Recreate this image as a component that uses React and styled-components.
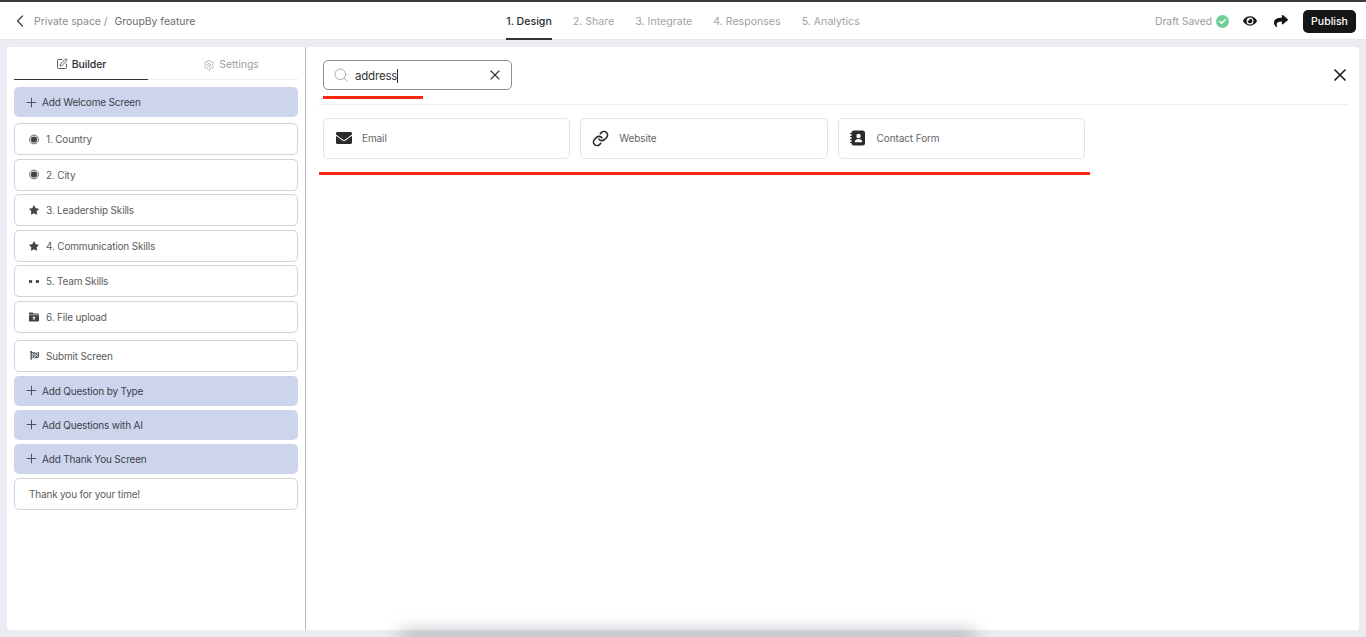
import React from 'react'
import styled, { createGlobalStyle } from 'styled-components'
import { ChevronLeft, Search, X, Plus, SquarePen, Settings, Link } from 'lucide-react'
import { FaStar, FaEnvelope, FaEye, FaShare, FaFlagCheckered, FaCheck } from 'react-icons/fa'

const GlobalStyle = createGlobalStyle`
    html, body {
        margin: 0;
        padding: 0;
        height: 100%;
        overflow: hidden;
        background: #ebecf2;
        font-family: Inter, "Liberation Sans", sans-serif;
    }
    * { box-sizing: border-box; }
`

const Page = styled.div`
    position: relative;
    height: 637px;
    display: flex;
    flex-direction: column;
    overflow: hidden;
`

const Header = styled.header`
    height: 40px;
    flex: none;
    display: grid;
    grid-template-columns: 1fr auto 1fr;
    align-items: stretch;
    background: #fff;
    border-top: 2px solid #3a3b40;
    border-bottom: 1px solid #e6e7ec;
    padding: 0 10px 0 10px;
`

const Crumbs = styled.div`
    display: flex;
    align-items: center;
    padding-top: 1px;
    font-size: 10.4px;
    color: #8a8a8a;
    svg { color: #444; margin-right: 4px; }
`

const CrumbCurrent = styled.span`
    color: #6b6b6b;
    margin-left: 7px;
`

const Steps = styled.nav`
    display: flex;
    gap: 21px;
`

const Step = styled.div`
    display: flex;
    align-items: center;
    padding-top: 2px;
    font-size: 10.6px;
    font-weight: ${p => (p.$active ? 500 : 400)};
    color: ${p => (p.$active ? '#2b2b2b' : '#a3a3a3')};
    border-bottom: 2px solid ${p => (p.$active ? '#333' : 'transparent')};
    margin-bottom: -1px;
`

const Actions = styled.div`
    display: flex;
    align-items: center;
    justify-content: flex-end;
    padding-top: 1px;
`

const DraftText = styled.span`
    font-size: 10.3px;
    color: #9a9a9a;
    margin-right: 4px;
`

const SavedBadge = styled.span`
    width: 13px;
    height: 13px;
    border-radius: 50%;
    background: #6fcf97;
    color: #fff;
    display: flex;
    align-items: center;
    justify-content: center;
    margin-right: 14px;
`

const HeaderIcon = styled.span`
    display: flex;
    color: #151515;
    margin-right: ${p => p.$gap}px;
`

const PublishButton = styled.button`
    height: 23px;
    width: 53px;
    border: none;
    border-radius: 5px;
    background: #161616;
    color: #fff;
    font: 500 10.5px Inter, sans-serif;
    padding: 0;
`

const Panel = styled.div`
    flex: 1;
    display: flex;
    margin: 7px;
    background: #fff;
    border-radius: 3px;
    min-height: 0;
`

const Sidebar = styled.aside`
    width: 299px;
    flex: none;
    border-right: 1px solid #b9b9b9;
    padding: 0 7px;
`

const Tabs = styled.div`
    display: flex;
    height: 33px;
    border-bottom: 1px solid #eeeeee;
    margin-bottom: 7px;
`

const Tab = styled.div`
    width: 134px;
    flex: ${p => (p.$active ? 'none' : 1)};
    display: flex;
    align-items: center;
    justify-content: center;
    gap: 4px;
    padding: 2px 0 0 ${p => (p.$active ? 0 : 16)}px;
    font-size: 10.5px;
    letter-spacing: -0.1px;
    font-weight: ${p => (p.$active ? 500 : 400)};
    color: ${p => (p.$active ? '#2b2b2b' : '#a0a0a0')};
    border-bottom: ${p => (p.$active ? '1px solid #333' : 'none')};
    margin-bottom: -1px;
    svg { color: ${p => (p.$active ? '#333' : '#a0a0a0')}; }
`

const AddRow = styled.div`
    height: 30px;
    margin-top: ${p => p.$top ?? 4}px;
    display: flex;
    align-items: center;
    gap: 3px;
    padding-left: 10px;
    background: #cdd5ec;
    border-radius: 5px;
    font-size: 10px;
    letter-spacing: -0.18px;
    color: #3c3f4a;
`

const ItemRow = styled.div`
    height: 32px;
    margin-top: ${p => p.$top ?? 3.5}px;
    display: flex;
    align-items: center;
    gap: 7px;
    padding-left: 14px;
    background: #fff;
    border: 1px solid #d4d4d6;
    border-radius: 5px;
    font-size: 10px;
    letter-spacing: -0.18px;
    color: #5c5c5c;
`

const ItemIcon = styled.span`
    width: 10px;
    display: flex;
    justify-content: center;
    color: #444;
`

const Content = styled.main`
    flex: 1;
    min-width: 0;
    padding: 13px 11px 0 13px;
`

const TopBar = styled.div`
    height: 45px;
    padding-left: 4px;
    border-bottom: 1px solid #eeeeee;
    display: flex;
    align-items: flex-start;
    justify-content: space-between;
`

const SearchColumn = styled.div`
    width: 189px;
`

const SearchBox = styled.div`
    height: 30px;
    display: flex;
    align-items: center;
    padding: 0 8px 0 9px;
    border: 1px solid #8f8f8f;
    border-radius: 5px;
    svg { flex: none; }
`

const SearchText = styled.span`
    flex: 1;
    margin-left: 6px;
    padding-top: 1px;
    font-size: 11.5px;
    letter-spacing: -0.2px;
    color: #333;
`

const Caret = styled.span`
    display: inline-block;
    width: 1px;
    height: 14px;
    background: #333;
    vertical-align: -3px;
`

const RedMark = styled.div`
    height: 3px;
    background: #fb2a0e;
    width: ${p => p.$width}px;
    margin: ${p => p.$margin};
`

const CloseWrap = styled.span`
    display: flex;
    margin: 5px -2px 0 0;
    color: #1a1a1a;
`

const Cards = styled.div`
    display: flex;
    gap: 10px;
    padding: 13px 0 0 4px;
`

const Card = styled.div`
    width: 247.3px;
    height: 41px;
    display: flex;
    align-items: center;
    padding: 0 0 1px 11px;
    border: 1px solid #e3e3e5;
    border-radius: 5px;
    font-size: 10px;
    letter-spacing: -0.1px;
    color: #666;
`

const CardIcon = styled.span`
    width: 17px;
    display: flex;
    justify-content: center;
    color: #2b2b2b;
    margin-right: 10px;
`

const BottomGlow = styled.div`
    position: absolute;
    left: 400px;
    bottom: -16px;
    width: 575px;
    height: 24px;
    background: rgba(150, 150, 158, 0.5);
    filter: blur(8px);
    pointer-events: none;
`

const TeamIcon = () => (
    <svg width="11" height="5" viewBox="0 0 11 5">
        <rect x="0" y="1" width="3.5" height="3" fill="currentColor" />
        <rect x="7.5" y="1" width="3.5" height="3" fill="currentColor" />
    </svg>
)

const RadioIcon = () => (
    <svg width="11" height="11" viewBox="0 0 11 11">
        <circle cx="5.5" cy="5.5" r="4.8" fill="none" stroke="currentColor" strokeWidth="0.9" />
        <circle cx="5.5" cy="5.5" r="3.4" fill="currentColor" />
    </svg>
)

const FolderUploadIcon = () => (
    <svg width="11" height="10" viewBox="0 0 11 10">
        <path d="M0 1.2C0 .5.5 0 1.2 0H4l1 1.2h4.8c.7 0 1.2.5 1.2 1.2v6.4c0 .7-.5 1.2-1.2 1.2H1.200C.5 10 0 9.500 0 8.800Z" fill="currentColor" />
        <path d="M0 2.600h11" stroke="#fff" strokeWidth=".6" />
        <path d="M5.500 4.200 3.700 6.200h1.200v2h1.200v-2h1.200Z" fill="#fff" />
    </svg>
)

const ContactIcon = () => (
    <svg width="16" height="16" viewBox="0 0 16 16">
        <rect x="1.500" y="0.500" width="13.500" height="15" rx="2.500" fill="currentColor" />
        <path d="M0 3.500h3M0 6.500h3M0 9.500h3M0 12.500h3" stroke="currentColor" strokeWidth="1.100" />
        <circle cx="8.500" cy="6" r="2.200" fill="#fff" />
        <path d="M4.800 12.200c0-2.200 1.600-3.200 3.700-3.200s3.700 1 3.700 3.200Z" fill="#fff" />
    </svg>
)

const questions = [
    { label: '1. Country', icon: <RadioIcon /> },
    { label: '2. City', icon: <RadioIcon /> },
    { label: '3. Leadership Skills', icon: <FaStar size={10} /> },
    { label: '4. Communication Skills', icon: <FaStar size={10} /> },
    { label: '5. Team Skills', icon: <TeamIcon /> },
    { label: '6. File upload', icon: <FolderUploadIcon /> },
]

const PlusIcon = () => <Plus size={15} strokeWidth={1.4} />

const App = () => {
    return (
        <Page>
            <GlobalStyle />
            <Header>
                <Crumbs>
                    <ChevronLeft size={20} strokeWidth={1.5} />
                    <span>Private space /</span>
                    <CrumbCurrent>GroupBy feature</CrumbCurrent>
                </Crumbs>
                <Steps>
                    <Step $active>1. Design</Step>
                    <Step>2. Share</Step>
                    <Step>3. Integrate</Step>
                    <Step>4. Responses</Step>
                    <Step>5. Analytics</Step>
                </Steps>
                <Actions>
                    <DraftText>Draft Saved</DraftText>
                    <SavedBadge><FaCheck size={7} /></SavedBadge>
                    <HeaderIcon $gap={17}><FaEye size={14} /></HeaderIcon>
                    <HeaderIcon $gap={15}><FaShare size={14} /></HeaderIcon>
                    <PublishButton>Publish</PublishButton>
                </Actions>
            </Header>
            <Panel>
                <Sidebar>
                    <Tabs>
                        <Tab $active><SquarePen size={12} strokeWidth={1.6} />Builder</Tab>
                        <Tab><Settings size={12} strokeWidth={1.4} />Settings</Tab>
                    </Tabs>
                    <AddRow $top={0}><PlusIcon />Add Welcome Screen</AddRow>
                    {questions.map((q, i) => (
                        <ItemRow key={q.label} $top={i === 0 ? 6.4 : 3.5}>
                            <ItemIcon>{q.icon}</ItemIcon>
                            {q.label}
                        </ItemRow>
                    ))}
                    <ItemRow $top={7}>
                        <ItemIcon><FaFlagCheckered size={9} /></ItemIcon>
                        Submit Screen
                    </ItemRow>
                    <AddRow><PlusIcon />Add Question by Type</AddRow>
                    <AddRow><PlusIcon />Add Questions with AI</AddRow>
                    <AddRow><PlusIcon />Add Thank You Screen</AddRow>
                    <ItemRow $top={4}>Thank you for your time!</ItemRow>
                </Sidebar>
                <Content>
                    <TopBar>
                        <SearchColumn>
                            <SearchBox>
                                <Search size={16} color="#a5a5a5" strokeWidth={1.4} />
                                <SearchText>address<Caret /></SearchText>
                                <X size={16} color="#333" strokeWidth={1.7} />
                            </SearchBox>
                            <RedMark $width={100} $margin="6px 0 0 0" />
                        </SearchColumn>
                        <CloseWrap><X size={20} strokeWidth={2} /></CloseWrap>
                    </TopBar>
                    <Cards>
                        <Card><CardIcon><FaEnvelope size={16} /></CardIcon>Email</Card>
                        <Card><CardIcon><Link size={17} strokeWidth={2.3} /></CardIcon>Website</Card>
                        <Card><CardIcon><ContactIcon /></CardIcon>Contact Form</Card>
                    </Cards>
                    <RedMark $width={771} $margin="13px 0 0 0" />
                </Content>
            </Panel>
            <BottomGlow />
        </Page>
    )
}

export default App
